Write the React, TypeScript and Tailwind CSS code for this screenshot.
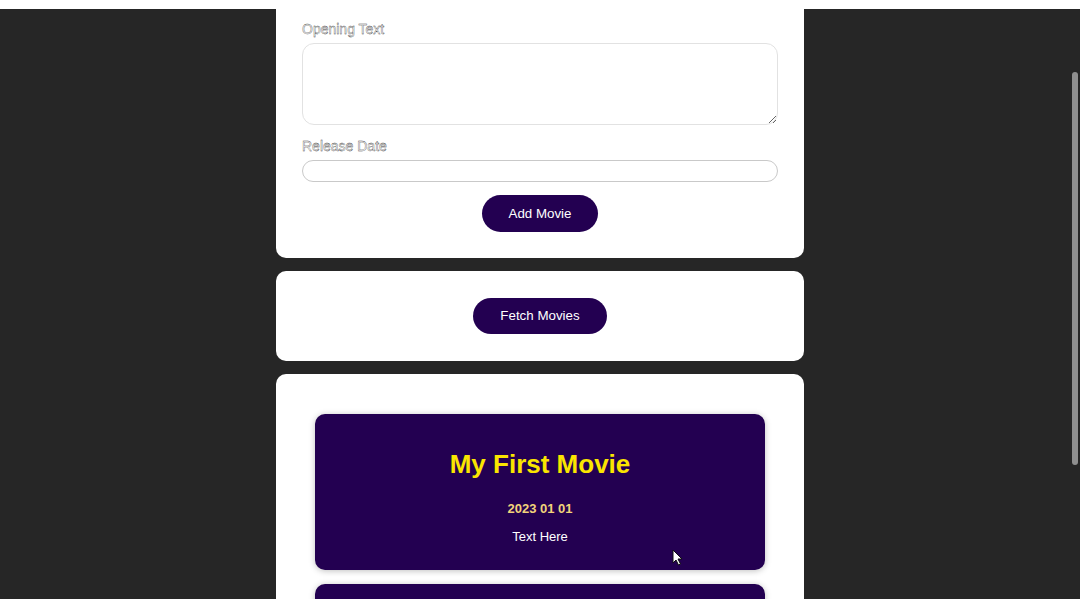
const FONT = "font-['Liberation_Sans',Arial,sans-serif]";

const MOVIES = [
  { title: "My First Movie", date: "2023 01 01", text: "Text Here" },
  { title: "My Second Movie", date: "2023 02 02", text: "More Text" },
];

function Label({ children }: { children: string }) {
  return (
    <label className="block text-[14px] leading-[16px] text-white [-webkit-text-stroke:0.35px_#3a3a3a]">
      {children}
    </label>
  );
}

function PillButton({ children, h }: { children: string; h: string }) {
  return (
    <button
      className={`${h} rounded-full bg-[#230051] px-[27px] text-[13.33px] text-white`}
    >
      {children}
    </button>
  );
}

export default function App() {
  return (
    <div className={`h-[608px] w-[1080px] overflow-hidden bg-white py-[9px] ${FONT}`}>
      <div className="relative h-[590px] overflow-hidden bg-[#262626]">
        <div className="mx-auto flex w-[528px] flex-col gap-[13px]">
          {/* Add movie form (scrolled) */}
          <section className="rounded-b-[10px] bg-white px-[26px] pt-[12px] pb-[26px]">
            <Label>Opening Text</Label>
            <textarea className="mt-[6px] block h-[82px] w-full rounded-[12px] border border-[#e2e2e2] outline-none" />
            <div className="mt-[13px]">
              <Label>Release Date</Label>
            </div>
            <input className="mt-[6px] block h-[22px] w-full rounded-full border border-[#c9c9c9] outline-none" />
            <div className="mt-[13px] flex justify-center">
              <PillButton h="h-[37px]">Add Movie</PillButton>
            </div>
          </section>

          {/* Fetch */}
          <section className="flex justify-center rounded-[10px] bg-white pt-[27px] pb-[27px]">
            <PillButton h="h-[36px]">Fetch Movies</PillButton>
          </section>

          {/* Movie list */}
          <section className="flex flex-col gap-[14px] rounded-[10px] bg-white px-[39px] pt-[40px] pb-[40px]">
            {MOVIES.map((m) => (
              <div
                key={m.title}
                className="rounded-[10px] bg-[#230051] pt-[35px] pb-[25px] text-center shadow-[0_1px_6px_rgba(0,0,0,0.25)]"
              >
                <h2 className="text-[26px] leading-[30px] font-bold text-[#fae500]">{m.title}</h2>
                <h3 className="mt-[22px] text-[13px] leading-[16px] font-bold text-[#f2d37a]">{m.date}</h3>
                <p className="mt-[12px] text-[13px] leading-[16px] text-white">{m.text}</p>
              </div>
            ))}
          </section>
        </div>

        {/* scrollbar thumb */}
        <div className="absolute top-[63px] right-[2px] h-[393px] w-[6px] rounded-full bg-[#8f8f8f]" />

        {/* mouse pointer */}
        <svg className="absolute top-[540px] left-[672px]" width="11" height="17" viewBox="0 0 11 17">
          <path d="M1 1 L1 14 L4 11 L6.5 16 L8.5 15 L6 10 L10 10 Z" fill="#fff" stroke="#111" strokeWidth="1" strokeLinejoin="round" />
        </svg>
      </div>
    </div>
  );
}
